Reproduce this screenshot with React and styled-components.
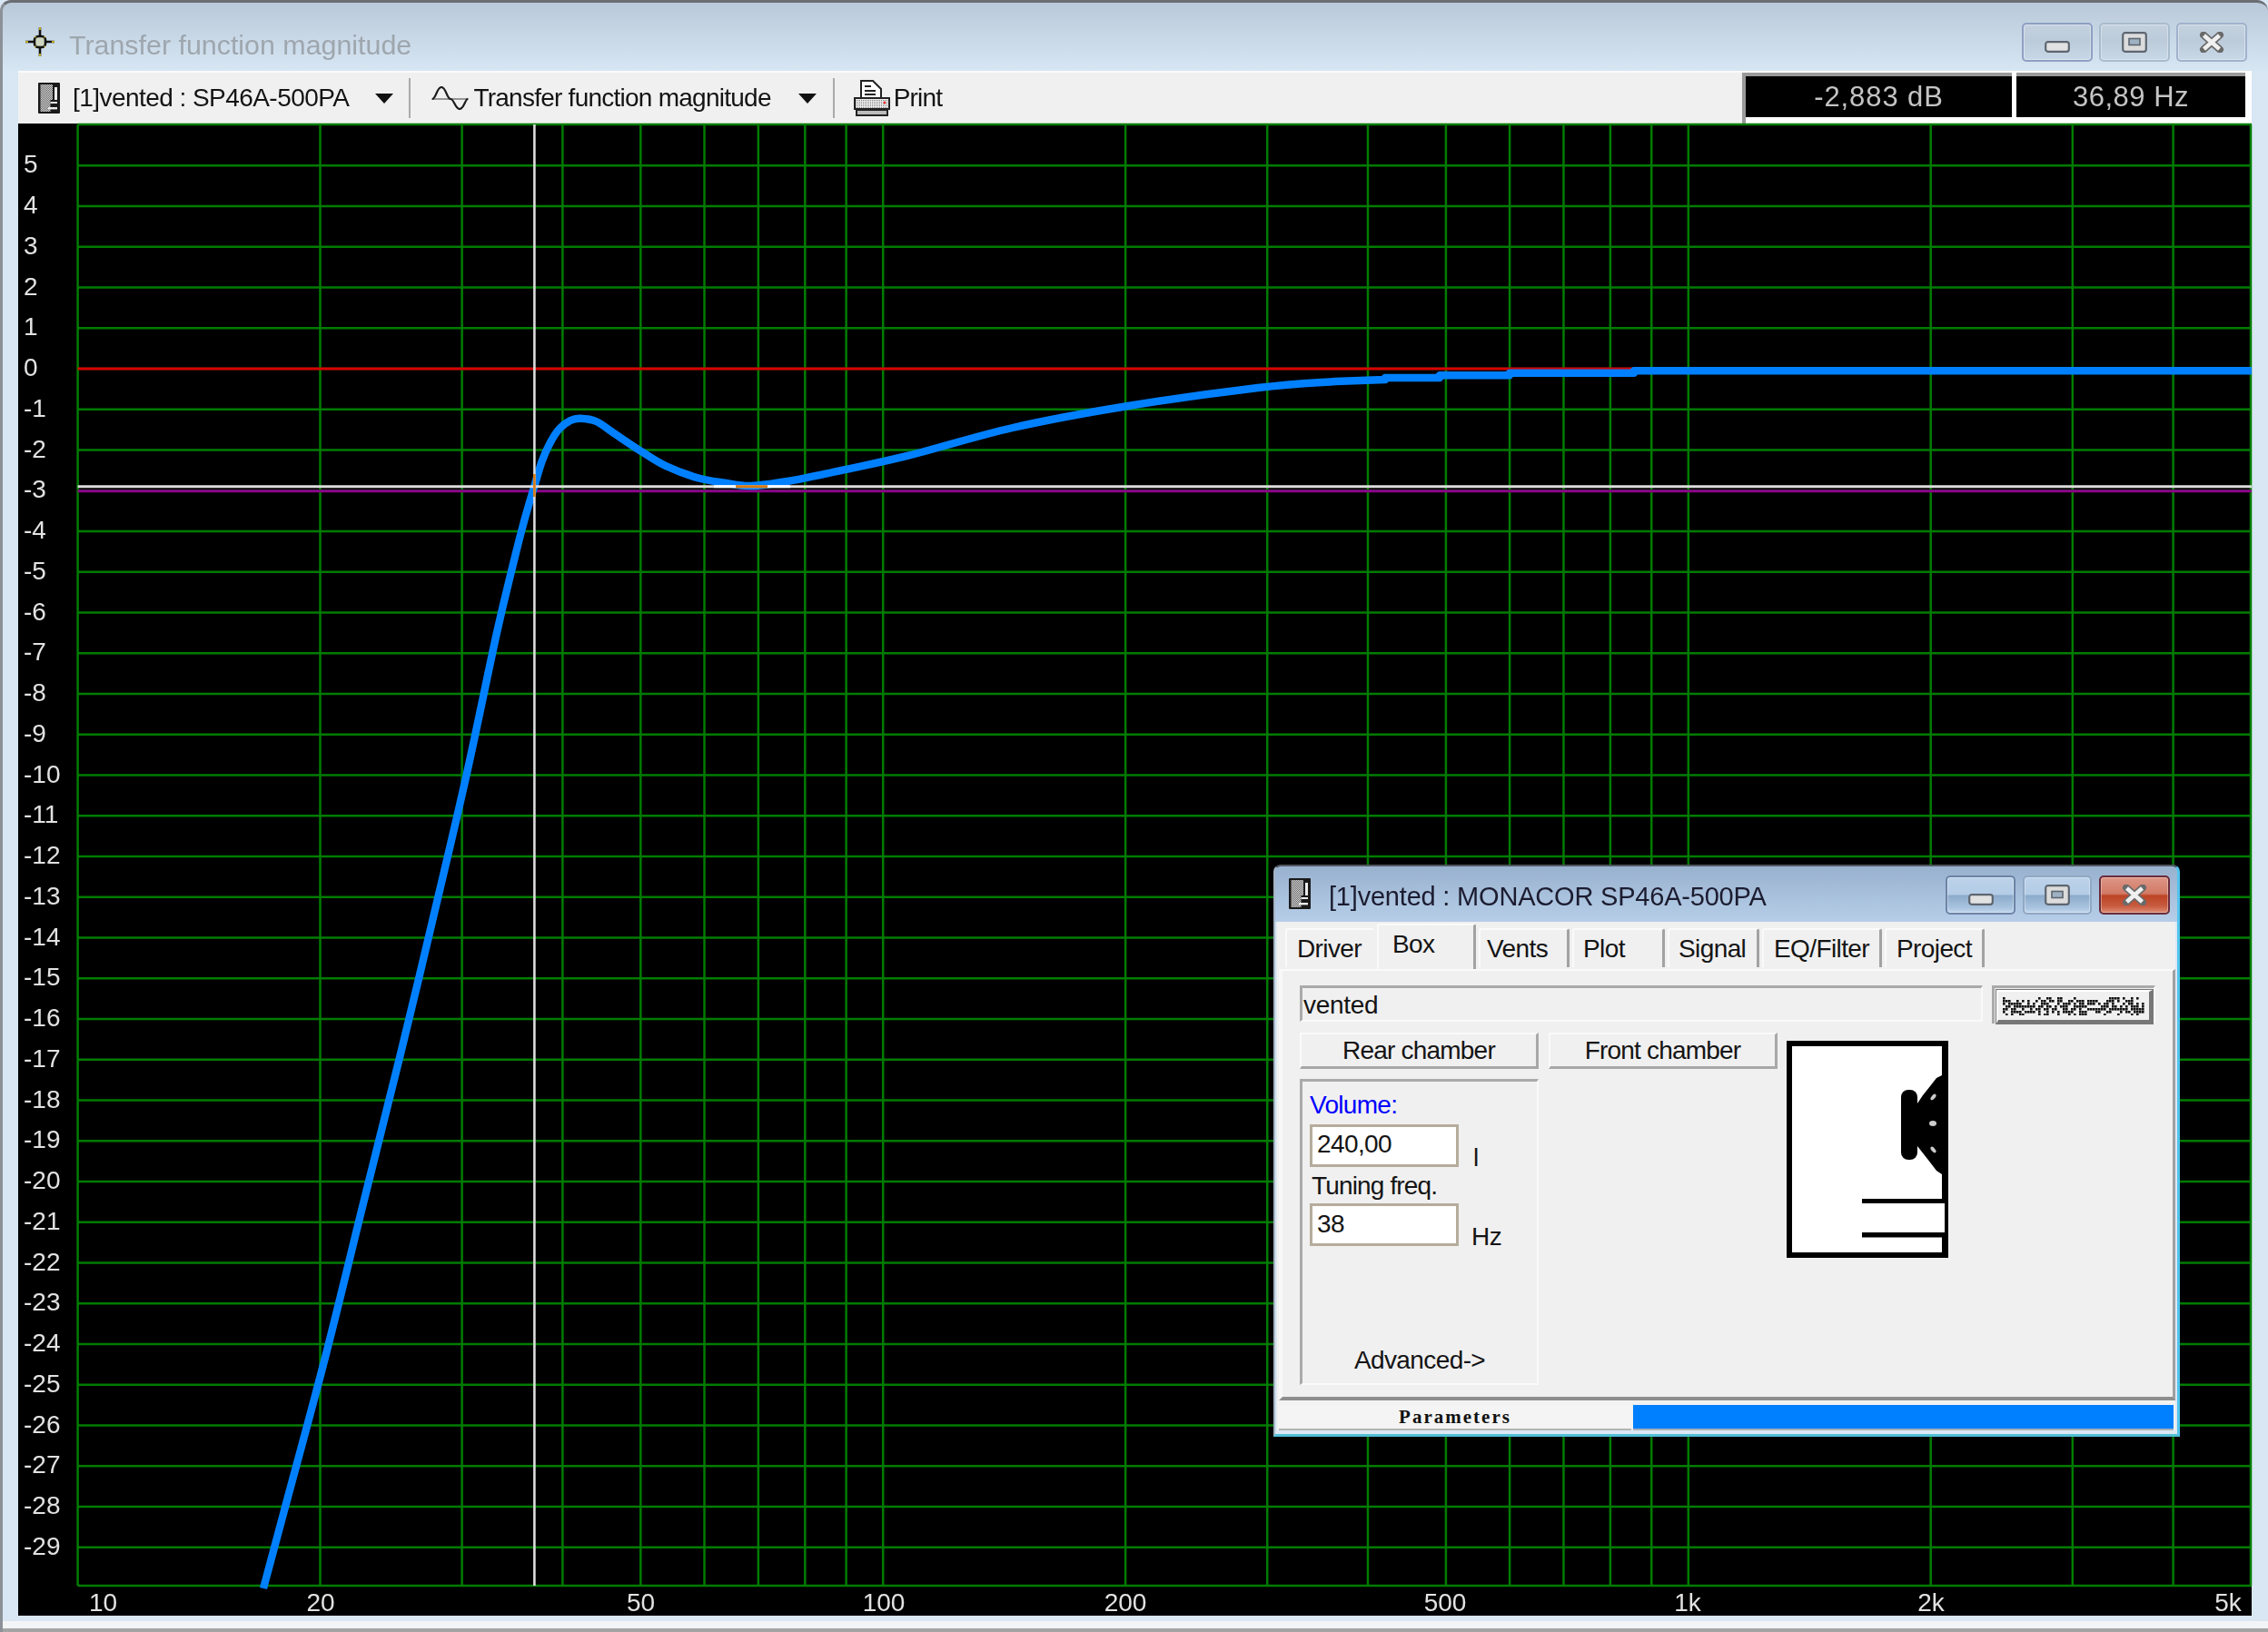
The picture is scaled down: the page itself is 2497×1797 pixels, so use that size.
import React from "react";
import styled, { createGlobalStyle } from "styled-components";

const Global = createGlobalStyle`
  html, body { margin: 0; padding: 0; background: #d9e6f3; overflow: hidden; }
  * { box-sizing: border-box; }
  body { font-family: "Liberation Sans", Arial, sans-serif; color: #111; }
`;

const Win = styled.div`
  position: relative;
  width: 2497px;
  height: 1797px;
  display: flex;
  flex-direction: column;
  overflow: hidden;
  border-top: 3px solid #6a6e72;
  border-left: 3px solid #8b9197;
  border-radius: 12px 12px 0 0;
  background: linear-gradient(#b9c9d9 0, #d7e6f3 75px, #d9e6f3 75px);
  filter: blur(0.6px);
`;
const TitleBar = styled.div`
  height: 75px;
  flex: none;
  display: flex;
  align-items: flex-start;
  padding: 27px 23px 0 25px;
`;
const WinTitle = styled.div`
  margin: 1px 0 0 16px;
  font-size: 30.4px;
  line-height: 36px;
  color: #9ea6ae;
`;
const Controls = styled.div`
  margin: ${p => p.$top}px 0 0 auto;
  display: flex;
  gap: ${p => p.$gap}px;
`;
const CtlButton = styled.div`
  width: ${p => p.$w}px;
  height: 43px;
  flex: none;
  border-radius: 5px;
  display: flex;
  justify-content: center;
  align-items: flex-start;
  padding-top: ${p => p.$pt}px;
  border: 2px solid ${p => p.$border};
  background: ${p => p.$bg};
  box-shadow: inset 0 0 0 1px rgba(255, 255, 255, 0.35);
`;
const Toolbar = styled.div`
  flex: none;
  height: 58px;
  margin: 0 18px 0 17px;
  background: #f0f0f0;
  border-top: 2px solid #fafafa;
  display: flex;
  align-items: center;
  padding-left: 22px;
`;
const ToolText = styled.span`
  font-size: 28px;
  line-height: 34px;
  letter-spacing: ${p => p.$ls ?? -0.8}px;
  margin-left: ${p => p.$ml}px;
  white-space: nowrap;
  color: #141414;
`;
const Caret = styled.span`
  width: 0;
  height: 0;
  margin-left: ${p => p.$ml}px;
  border-left: 10px solid transparent;
  border-right: 10px solid transparent;
  border-top: 11px solid #111;
`;
const ToolSep = styled.span`
  width: 2px;
  height: 44px;
  margin-left: ${p => p.$ml}px;
  background: #aaa;
`;
const StatusPanel = styled.div`
  margin-left: auto;
  align-self: stretch;
  width: 561px;
  background: #fff;
  display: flex;
  gap: 5px;
  padding: 0 7px 7px 0;
  border-left: 4px solid #9a9a9a;
`;
const Readout = styled.div`
  width: ${p => p.$w}px;
  height: 49px;
  background: #000;
  border-top: 4px solid #9a9a9a;
  color: #c4c4c4;
  font-size: 31px;
  letter-spacing: ${p => p.$ls}px;
  line-height: 45px;
  text-align: center;
  white-space: nowrap;
`;
const Chart = styled.svg`
  display: block;
  flex: none;
  margin-left: 17px;
  width: 2459px;
  height: 1643px;
  background: #000;
  overflow: visible;
`;
const AxisText = styled.text`
  font-family: "Liberation Sans", Arial, sans-serif;
  font-size: 28px;
  fill: #e2e2e2;
`;
const Footer = styled.div`
  flex: 1;
  margin-top: 6px;
  background: #f3f4f5;
  border-bottom: 4px solid #a4a4a4;
`;

const Dialog = styled.div`
  position: absolute;
  left: 1399px;
  top: 949px;
  width: 998px;
  height: 630px;
  display: flex;
  flex-direction: column;
  border-top: 2px solid #50585f;
  border-left: 2px solid #a5b4c2;
  border-right: 3px solid #52c4ee;
  border-bottom: 3px solid #52bfd6;
  border-radius: 8px 8px 0 0;
  background: linear-gradient(#98b1ce 0, #b6cee8 61px, #dbe8f3 61px);
`;
const DialogTitleBar = styled.div`
  height: 61px;
  flex: none;
  display: flex;
  align-items: flex-start;
  padding: 13px 8px 0 15px;
`;
const DialogTitle = styled.div`
  margin: 2px 0 0 20px;
  font-size: 29px;
  line-height: 36px;
  letter-spacing: -0.2px;
  color: #1c1c30;
  white-space: nowrap;
`;
const DialogBody = styled.div`
  flex: 1;
  min-height: 0;
  margin: 0 2px 4px 2px;
  background: #f0f0f0;
  display: flex;
  flex-direction: column;
`;
const TabRow = styled.div`
  height: 52px;
  flex: none;
  display: flex;
  align-items: flex-end;
  gap: 3px;
  padding: 0 0 2px 9px;
`;
const Tab = styled.div`
  width: ${p => p.$w}px;
  height: ${p => (p.$active ? 50 : 43)}px;
  margin-bottom: ${p => (p.$active ? -2 : 0)}px;
  padding: 6px 0 0 ${p => p.$pl}px;
  font-size: 28px;
  line-height: 30px;
  letter-spacing: -0.6px;
  border-top: 2px solid #fafafa;
  border-left: 2px solid #fafafa;
  border-right: ${p => (p.$first ? "0" : "3px solid #a2a2a2")};
  border-radius: 3px 3px 0 0;
  white-space: nowrap;
  background: #f0f0f0;
  color: #141414;
`;
const Panel = styled.div`
  flex: none;
  height: 475px;
  margin-left: 2px;
  border-top: 2px solid #fafafa;
  border-left: 4px solid #f8f8f8;
  border-right: 3px solid #a0a0a0;
  border-bottom: 4px solid #8e8e8e;
  padding: 16px 0 0 19px;
  display: flex;
  flex-direction: column;
`;
const TypeRow = styled.div`
  display: flex;
  gap: 10px;
  height: 42px;
`;
const TypeField = styled.div`
  width: 752px;
  height: 40px;
  border-top: 3px solid #aaa;
  border-left: 3px solid #aaa;
  border-right: 2px solid #fafafa;
  border-bottom: 2px solid #fafafa;
  padding-left: 1px;
  font-size: 28px;
  line-height: 38px;
  letter-spacing: -0.3px;
  color: #141414;
`;
const GlitchOuter = styled.div`
  width: 180px;
  height: 42px;
  padding: 2px 3px 0 2px;
  border-top: 3px solid #aaa;
  border-left: 3px solid #aaa;
  border-right: 2px solid #fafafa;
`;
const GlitchButton = styled.div`
  width: 172px;
  height: 37px;
  background: #f0f0f0;
  border-top: 2px solid #fff;
  border-left: 2px solid #fff;
  border-right: 4px solid #777;
  border-bottom: 4px solid #777;
  outline: 1px solid #777;
  display: flex;
  align-items: center;
  justify-content: center;
`;
const ChamberRow = styled.div`
  display: flex;
  margin-top: 10px;
  gap: 10px;
`;
const LeftColumn = styled.div`
  width: 526px;
  display: flex;
  flex-direction: column;
`;
const ChamberButtons = styled.div`
  display: flex;
  gap: 11px;
`;
const ChamberButton = styled.div`
  width: ${p => p.$w}px;
  height: 40px;
  border-top: 2px solid #fafafa;
  border-left: 2px solid #fafafa;
  border-right: 3px solid #a8a8a8;
  border-bottom: 3px solid #a8a8a8;
  text-align: center;
  font-size: 28px;
  line-height: 36px;
  letter-spacing: -0.8px;
  color: #141414;
`;
const GroupBox = styled.div`
  width: 263px;
  height: 337px;
  margin-top: 11px;
  border-top: 3px solid #aaa;
  border-left: 3px solid #aaa;
  border-right: 2px solid #fafafa;
  border-bottom: 2px solid #fafafa;
  padding: 8px 0 0 8px;
  display: flex;
  flex-direction: column;
`;
const FieldLabel = styled.div`
  font-size: 28px;
  line-height: 36px;
  letter-spacing: ${p => p.$ls ?? -0.7}px;
  margin-left: ${p => p.$ml || 0}px;
  margin-top: ${p => p.$mt || 0}px;
  color: ${p => p.$color || "#141414"};
`;
const ValueRow = styled.div`
  display: flex;
  align-items: flex-end;
  gap: ${p => p.$gap}px;
  margin-top: ${p => p.$mt}px;
`;
const ValueBox = styled.div`
  width: 164px;
  height: 47px;
  background: #fff;
  border: 3px solid #b5ac9c;
  padding-left: 5px;
  font-size: 28px;
  line-height: ${p => p.$lh}px;
  letter-spacing: -0.6px;
  color: #141414;
`;
const Unit = styled.span`
  font-size: 28px;
  line-height: 24px;
  letter-spacing: -0.5px;
  margin-bottom: -2px;
  color: #141414;
`;
const Advanced = styled.div`
  margin: auto 8px 8px 0;
  text-align: center;
  font-size: 28px;
  line-height: 34px;
  letter-spacing: -0.6px;
  color: #141414;
`;
const Preview = styled.svg`
  display: block;
  width: 178px;
  height: 239px;
  margin-top: 9px;
`;
const StatusBar = styled.div`
  flex: 1;
  display: flex;
  padding: 5px 2px 0 2px;
  background: #f2f2f2;
`;
const ParamCell = styled.div`
  width: 388px;
  height: 28px;
  text-align: center;
  font-family: "Liberation Serif", "Times New Roman", serif;
  font-weight: 700;
  font-size: 21px;
  line-height: 26px;
  letter-spacing: 2px;
  color: #111;
  border-bottom: 2px solid #b4b4b4;
  background: #f4f4f4;
`;
const ProgressFill = styled.div`
  flex: 1;
  margin-left: 2px;
  height: 28px;
  background: #0080ff;
  border-bottom: 2px solid #a8b0b8;
`;

/* ---------- chart data ---------- */
const PX = 85.6, PR = 2479, PT = 137, PB = 1746;
const fx = f => PX + 886.6 * Math.log10(f / 10);
const dy = d => 406 - 44.75 * d;
const freqs = [20, 30, 40, 50, 60, 70, 80, 90, 100, 200, 300, 400, 500, 600, 700, 800, 900, 1000, 2000, 3000, 4000];
const dbs = [];
for (let d = 5; d >= -29; d--) dbs.push(d);
const xLabels = [["10", 113.5], ["20", 353], ["50", 705.5], ["100", 973], ["200", 1239], ["500", 1591], ["1k", 1858], ["2k", 2126], ["5k", 2453]];

const curvePts = [
  [290, 1749], [313.3, 1662], [358.3, 1493.6], [400, 1325], [440, 1164.6], [476.7, 1011.5],
  [513.3, 854.6], [546.7, 698], [565, 621], [577, 574], [588.7, 534], [597, 507], [606, 487],
  [616, 472], [628, 463], [639, 460.7], [656.4, 464], [675.5, 476.7],
  [706, 497], [733, 513], [767.4, 526], [798, 531.7], [826.7, 535], [866.9, 530],
  [916.7, 520], [1000, 501.7], [1115, 471], [1239, 447.5], [1385, 427], [1470, 420],
];
function spline(pts) {
  let d = `M${pts[0][0]} ${pts[0][1]}`;
  for (let i = 0; i < pts.length - 1; i++) {
    const p0 = pts[Math.max(i - 1, 0)], p1 = pts[i], p2 = pts[i + 1], p3 = pts[Math.min(i + 2, pts.length - 1)];
    const c1 = [p1[0] + (p2[0] - p0[0]) / 6, p1[1] + (p2[1] - p0[1]) / 6];
    const c2 = [p2[0] - (p3[0] - p1[0]) / 6, p2[1] - (p3[1] - p1[1]) / 6];
    d += `C${c1[0]} ${c1[1]} ${c2[0]} ${c2[1]} ${p2[0]} ${p2[1]}`;
  }
  return d;
}
const curvePath = spline(curvePts) + "L1525 418L1525 416L1585 416L1585 413.3L1662 413.3L1662 410.7L1799 410.7L1799 408.2L2479 408.2";

/* ---------- drawings ---------- */
const Crosshair = () => (
  <svg width="32" height="32" viewBox="0 0 32 32">
    <path d="M16 0V32M0 16H32" stroke="#111" strokeWidth="2.6" />
    <rect x="10" y="10" width="12" height="12" rx="4" fill="#cfd6c0" stroke="#111" strokeWidth="2.6" />
    <path d="M10 10h1.6v1.6H10zM20.4 10h1.6v1.6h-1.6zM10 20.4h1.6V22H10zM20.4 20.4h1.6V22h-1.6z" fill="#c9b92a" />
    <path d="M16 0V3M16 29V32M0 16H3M29 16H32" stroke="#b8a820" strokeWidth="2" />
  </svg>
);
const SpeakerIcon = () => (
  <svg width="24" height="34" viewBox="0 0 24 34">
    <defs>
      <pattern id="dither" width="2" height="2" patternUnits="userSpaceOnUse">
        <rect width="2" height="2" fill="#666" />
        <rect width="1" height="1" fill="#d8d8d8" />
        <rect x="1" y="1" width="1" height="1" fill="#d8d8d8" />
      </pattern>
    </defs>
    <rect width="24" height="34" rx="1" fill="#1a1a1a" />
    <rect x="2.5" y="2" width="11" height="30" fill="url(#dither)" />
    <rect x="13" y="2" width="3" height="17" fill="url(#dither)" />
    <rect x="18" y="5" width="3" height="14" fill="#ececec" />
    <rect x="13.5" y="21" width="7.5" height="2" fill="#ececec" />
    <rect x="11" y="27" width="10" height="2.4" fill="#ececec" />
  </svg>
);
const WaveIcon = () => (
  <svg width="41" height="26" viewBox="0 0 41 26" style={{ marginLeft: 23 }}>
    <path d="M0 14H41" stroke="#777" strokeWidth="1.6" />
    <path d="M1 14C5 14 6 1 11 1C16 1 17 14 21 14C25 14 26 25 31 25C36 25 37 14 40 14" fill="none" stroke="#1c1c1c" strokeWidth="2.2" />
  </svg>
);
const PrinterIcon = () => (
  <svg width="40" height="40" viewBox="0 0 40 40" style={{ marginLeft: 21 }}>
    <path d="M8 1H21L30 10V20H8Z" fill="#fff" stroke="#222" strokeWidth="2" />
    <path d="M12 7H19M12 12H24M12 16H24" stroke="#222" strokeWidth="2" />
    <path d="M1 20H39V32H1Z" fill="url(#pdots)" stroke="#222" strokeWidth="2" />
    <defs>
      <pattern id="pdots" width="2" height="2" patternUnits="userSpaceOnUse">
        <rect width="2" height="2" fill="#eee" />
        <rect width="1" height="1" fill="#777" />
      </pattern>
    </defs>
    <circle cx="34" cy="25" r="1.4" fill="#e33" />
    <path d="M3 33H37V39H3Z" fill="#bbb" stroke="#222" strokeWidth="2" />
  </svg>
);
const MinGlyph = () => (
  <svg width="28" height="13" viewBox="0 0 28 13">
    <rect x="1.2" y="1.2" width="25.6" height="10.6" rx="2.5" fill="#e2e2e2" stroke="#5d6670" strokeWidth="2.2" />
  </svg>
);
const MaxGlyph = () => (
  <svg width="28" height="23" viewBox="0 0 28 23">
    <rect x="1.2" y="1.2" width="25.6" height="20.6" rx="2.5" fill="#dcdcdc" stroke="#5d6670" strokeWidth="2.2" />
    <rect x="8" y="7.5" width="12" height="7" fill="#9fb2c4" stroke="#5d6670" strokeWidth="1.6" />
  </svg>
);
const CloseGlyph = () => (
  <svg width="28" height="23" viewBox="0 0 28 23">
    <path d="M5 3.5L23 19.5M23 3.5L5 19.5" stroke="#6a6a6a" strokeWidth="8" strokeLinecap="round" />
    <path d="M5.5 4L22.5 19M22.5 4L5.5 19" stroke="#f0f0f0" strokeWidth="4.6" />
  </svg>
);

const GlitchText = () => {
  const cells = [];
  for (let x = 0; x < 156; x += 3) {
    for (let y = 0; y < 20; y += 3) {
      const h = Math.abs(Math.sin(x * 12.9898 + y * 78.233) * 43758.5453) % 1;
      const band = y >= 3 && y <= 15 ? 0.6 : 0.35;
      if (h < band) cells.push(<rect key={`${x}-${y}`} x={x} y={y} width="2.6" height="2.6" fill="#111" />);
    }
  }
  return <svg width="156" height="20" viewBox="0 0 156 20">{cells}</svg>;
};

const BoxPreview = () => (
  <Preview viewBox="0 0 178 239">
    <rect width="178" height="239" fill="#000" />
    <rect x="6" y="6" width="165" height="227" fill="#fff" />
    <rect x="171" y="179" width="3" height="32" fill="#fff" />
    <rect x="83" y="174" width="91" height="5" fill="#000" />
    <rect x="83" y="211" width="91" height="5.5" fill="#000" />
    <rect x="126" y="54" width="18" height="77" rx="8" fill="#000" />
    <path d="M144 69L150 60L158 50L165 41L171 38V147L165 143L155 130L144 116Z" fill="#000" />
    <ellipse cx="161.5" cy="62" rx="2" ry="4" transform="rotate(40 161.5 62)" fill="#ccc" />
    <ellipse cx="161" cy="91" rx="4" ry="3" fill="#ccc" />
    <ellipse cx="161.5" cy="120" rx="2" ry="4" transform="rotate(-40 161.5 120)" fill="#ccc" />
  </Preview>
);

const tabs = [
  ["Driver", 98, 11],
  ["Box", 109, 15],
  ["Vents", 100, 7],
  ["Plot", 102, 10],
  ["Signal", 101, 10],
  ["EQ/Filter", 132, 11],
  ["Project", 110, 11],
];

const mainBg = "linear-gradient(#c4d2df, #bccbda 45%, #c8d8e7)";
const dlgBg = "linear-gradient(#bcd2ea 0, #b4cce6 48%, #8cabcb 52%, #a8c3df 85%, #c2d6ec)";
const redBg = "linear-gradient(#dd9686 0, #d27a66 46%, #bd4424 52%, #c65a3e 80%, #dd8a74)";

export default function App() {
  return (
    <>
      <Global />
      <Win>
        <TitleBar>
          <Crosshair />
          <WinTitle>Transfer function magnitude</WinTitle>
          <Controls $top={-5} $gap={7}>
            <CtlButton $w={78} $pt={18} $border="#8f9fc4" $bg={mainBg}><MinGlyph /></CtlButton>
            <CtlButton $w={78} $pt={8} $border="#a9bccd" $bg={mainBg}><MaxGlyph /></CtlButton>
            <CtlButton $w={78} $pt={8} $border="#a0b2cc" $bg={mainBg}><CloseGlyph /></CtlButton>
          </Controls>
        </TitleBar>
        <Toolbar>
          <SpeakerIcon />
          <ToolText $ml={14} $ls={-0.55}>[1]vented : SP46A-500PA</ToolText>
          <Caret $ml={29} />
          <ToolSep $ml={17} />
          <WaveIcon />
          <ToolText $ml={5} $ls={-0.75}>Transfer function magnitude</ToolText>
          <Caret $ml={30} />
          <ToolSep $ml={18} />
          <PrinterIcon />
          <ToolText $ml={4}>Print</ToolText>
          <StatusPanel>
            <Readout $w={293} $ls={0.9}>-2,883 dB</Readout>
            <Readout $w={252} $ls={0.5}>36,89 Hz</Readout>
          </StatusPanel>
        </Toolbar>
        <Chart viewBox="20 136 2459 1643">
          <g stroke="#007c00" strokeWidth="2.5">
            {dbs.map(d => <line key={d} x1={PX} x2={PR} y1={dy(d)} y2={dy(d)} />)}
            <line x1={PX} x2={PR} y1={PT} y2={PT} />
            <line x1={PX} x2={PR} y1={PB} y2={PB} />
            <line x1={PX} x2={PX} y1={PT} y2={PB} />
            <line x1={PR - 1} x2={PR - 1} y1={PT} y2={PB} />
            {freqs.map(f => <line key={f} x1={fx(f)} x2={fx(f)} y1={PT} y2={PB} />)}
          </g>
          <line x1={PX} x2={PR} y1="406" y2="406" stroke="#d80000" strokeWidth="3" />
          <line x1={PX} x2={PR} y1="540.7" y2="540.7" stroke="#8a008a" strokeWidth="3" />
          <path d={curvePath} fill="none" stroke="#0080ff" strokeWidth="8.4" strokeLinejoin="round" />
          <line x1={PX} x2={PR} y1="535.7" y2="535.7" stroke="#dcdcdc" strokeWidth="3" />
          <line x1="588.4" x2="588.4" y1={PT} y2={PB} stroke="#dcdcdc" strokeWidth="2.6" />
          <line x1="786" x2="810" y1="535.7" y2="535.7" stroke="#f6fbff" strokeWidth="3" />
          <line x1="845" x2="870" y1="535.7" y2="535.7" stroke="#f6fbff" strokeWidth="3" />
          <line x1="810" x2="845" y1="535.7" y2="535.7" stroke="#d97a10" strokeWidth="3" />
          <line x1="588.4" x2="588.4" y1="522" y2="547" stroke="#d97a10" strokeWidth="2.6" />
          {dbs.map(d => <AxisText key={d} x="26" y={dy(d) + 8}>{d}</AxisText>)}
          {xLabels.map(([t, x]) => <AxisText key={t} x={x} y="1773.5" textAnchor="middle">{t}</AxisText>)}
        </Chart>
        <Footer />
        <Dialog>
          <DialogTitleBar>
            <SpeakerIcon />
            <DialogTitle>[1]vented : MONACOR SP46A-500PA</DialogTitle>
            <Controls $top={-3} $gap={8}>
              <CtlButton $w={77} $pt={18} $border="#6d84a6" $bg={dlgBg}><MinGlyph /></CtlButton>
              <CtlButton $w={76} $pt={8} $border="#8fa8c4" $bg={dlgBg}><MaxGlyph /></CtlButton>
              <CtlButton $w={78} $pt={8} $border="#6b2b3a" $bg={redBg}><CloseGlyph /></CtlButton>
            </Controls>
          </DialogTitleBar>
          <DialogBody>
            <TabRow>
              {tabs.map(([t, w, pl]) => (
                <Tab key={t} $w={w} $pl={pl} $active={t === "Box"} $first={t === "Driver"}>{t}</Tab>
              ))}
            </TabRow>
            <Panel>
              <TypeRow>
                <TypeField>vented</TypeField>
                <GlitchOuter>
                  <GlitchButton><GlitchText /></GlitchButton>
                </GlitchOuter>
              </TypeRow>
              <ChamberRow>
                <LeftColumn>
                  <ChamberButtons>
                    <ChamberButton $w={263}>Rear chamber</ChamberButton>
                    <ChamberButton $w={252}>Front chamber</ChamberButton>
                  </ChamberButtons>
                  <GroupBox>
                    <FieldLabel $color="#0000ff">Volume:</FieldLabel>
                    <ValueRow $gap={16} $mt={3}>
                      <ValueBox $lh={38}>240,00</ValueBox>
                      <Unit>l</Unit>
                    </ValueRow>
                    <FieldLabel $ml={2} $mt={3} $ls={-0.85}>Tuning freq.</FieldLabel>
                    <ValueRow $gap={14} $mt={1}>
                      <ValueBox $lh={39}>38</ValueBox>
                      <Unit>Hz</Unit>
                    </ValueRow>
                    <Advanced>Advanced-&gt;</Advanced>
                  </GroupBox>
                </LeftColumn>
                <BoxPreview />
              </ChamberRow>
            </Panel>
            <StatusBar>
              <ParamCell>Parameters</ParamCell>
              <ProgressFill />
            </StatusBar>
          </DialogBody>
        </Dialog>
      </Win>
    </>
  );
}
